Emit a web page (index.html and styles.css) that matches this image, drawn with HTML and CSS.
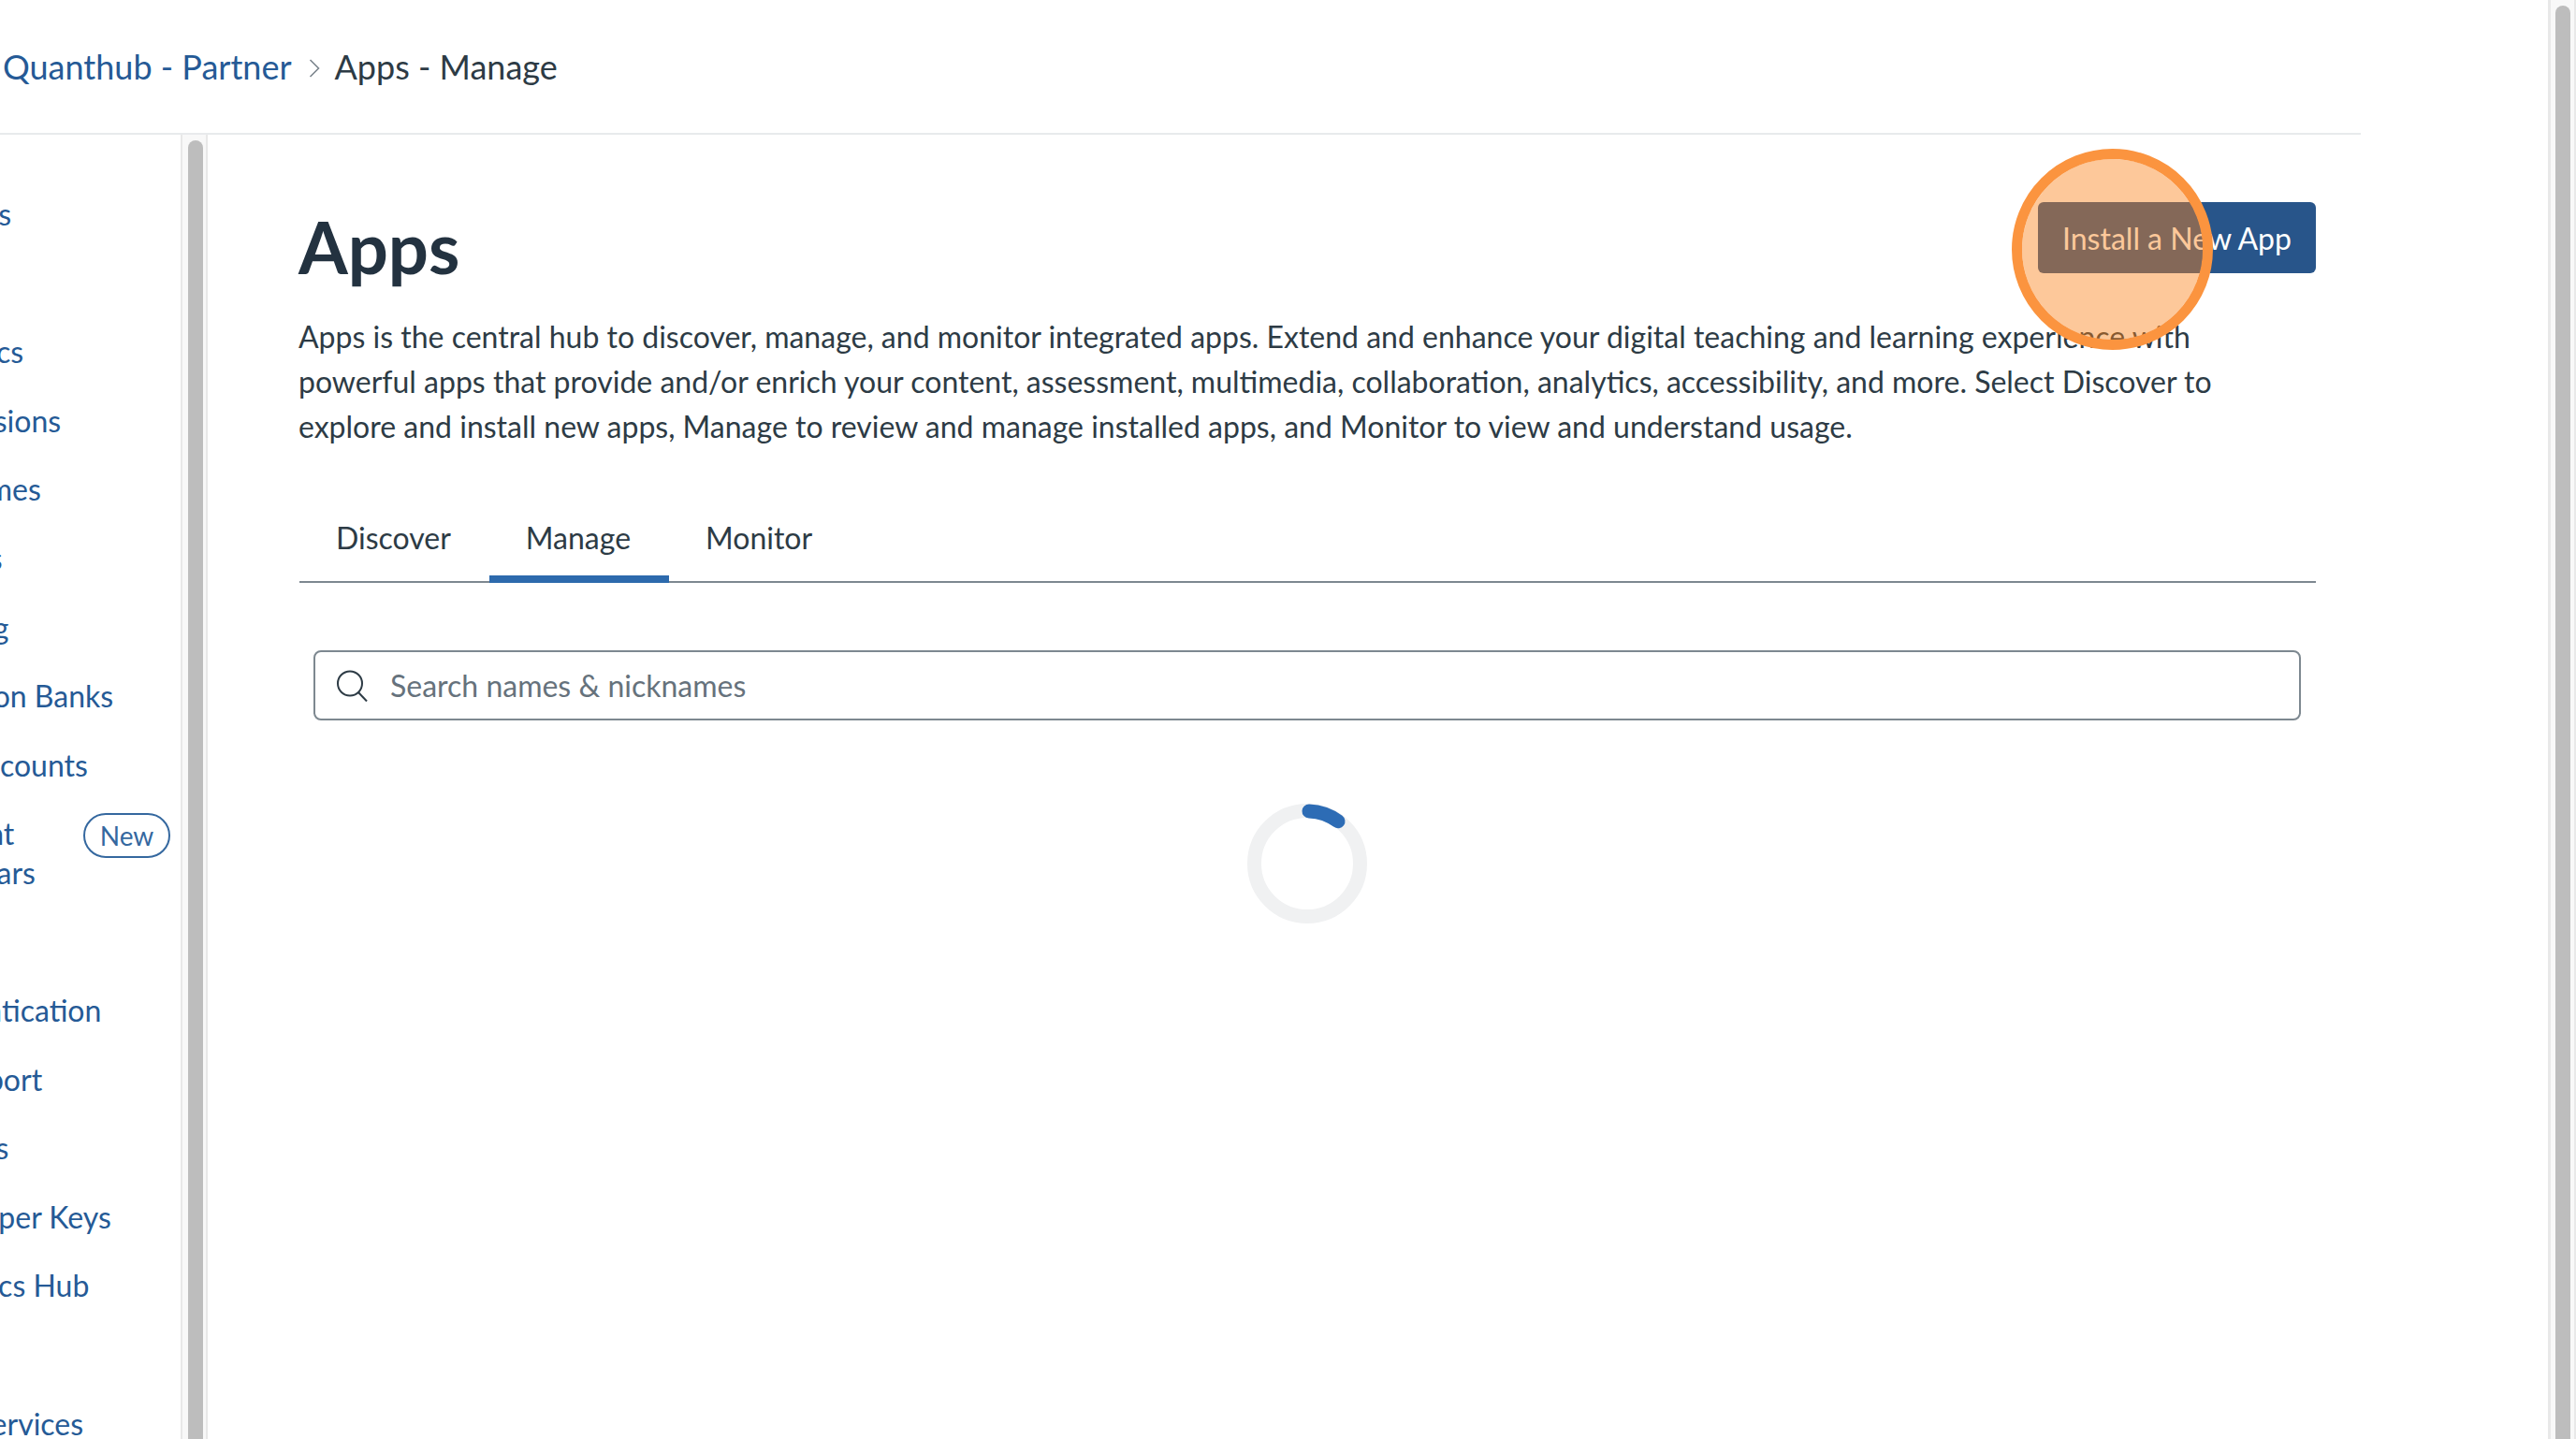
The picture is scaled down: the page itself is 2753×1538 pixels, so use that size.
FILE: index.html
```html
<!DOCTYPE html>
<html lang="en">
<head>
<meta charset="utf-8">
<title>Apps - Manage</title>
<link rel="stylesheet" href="styles.css">
</head>
<body>
<div class="app">
  <div class="viewport">
    <header class="topbar">
      <a class="crumb-link">Quanthub - Partner</a>
      <svg class="crumb-sep" viewBox="0 0 12 20" width="12" height="20"><path d="M1.5 1l9 9-9 9" fill="none" stroke="#7b858d" stroke-width="1.6"/></svg>
      <span class="crumb-current">Apps - Manage</span>
    </header>
    <div class="columns">
      <nav class="sidebar">
        <ul class="nav-list">
          <li class="nav-item">Courses</li>
          <li class="nav-item">People</li>
          <li class="nav-item">Statistics</li>
          <li class="nav-item">Permissions</li>
          <li class="nav-item">Outcomes</li>
          <li class="nav-item">Rubrics</li>
          <li class="nav-item">Grading</li>
          <li class="nav-item">Question Banks</li>
          <li class="nav-item">Sub-Accounts</li>
          <li class="nav-item nav-item-badge"><span class="nav-label">Account<br>Calendars</span><span class="badge">New</span></li>
          <li class="nav-item">Terms</li>
          <li class="nav-item">Authentication</li>
          <li class="nav-item">SIS Import</li>
          <li class="nav-item">Themes</li>
          <li class="nav-item">Developer Keys</li>
          <li class="nav-item">Analytics Hub</li>
          <li class="nav-item">Apps</li>
          <li class="nav-item">Web Services</li>
        </ul>
      </nav>
      <div class="scroll-track side-track"><div class="scroll-thumb"></div></div>
      <main class="main">
        <div class="title-row">
          <h1 class="title">Apps</h1>
          <button class="primary-btn">Install a New App</button>
        </div>
        <p class="intro">Apps is the central hub to discover, manage, and monitor integrated apps. Extend and enhance your digital teaching and learning experience with powerful apps that provide and/or enrich your content, assessment, multimedia, collaboration, analytics, accessibility, and more. Select Discover to explore and install new apps, Manage to review and manage installed apps, and Monitor to view and understand usage.</p>
        <div class="tabs">
          <span class="tab">Discover</span>
          <span class="tab tab-active">Manage</span>
          <span class="tab">Monitor</span>
        </div>
        <div class="search">
          <svg class="search-icon" viewBox="0 0 34 34" width="34" height="34"><circle cx="15" cy="14.5" r="13" fill="none" stroke="#2d3b45" stroke-width="2"/><path d="M24 24l9 9.5" fill="none" stroke="#2d3b45" stroke-width="2"/></svg>
          <span class="search-placeholder">Search names &amp; nicknames</span>
        </div>
        <div class="spinner-wrap">
          <svg class="spinner" viewBox="0 0 128 128" width="128" height="128"><circle cx="64" cy="64" r="56.5" fill="none" stroke="#f0f1f2" stroke-width="15"/><path d="M66 8a56 56 0 0 1 31 10.8" fill="none" stroke="#2d6cb5" stroke-width="15" stroke-linecap="round"/></svg>
        </div>
      </main>
    </div>
    <div class="highlight"></div>
  </div>
  <div class="scroll-track page-track"><div class="scroll-thumb"></div></div>
</div>
</body>
</html>
```
FILE: styles.css
```css
* { box-sizing: border-box; }
html, body { margin: 0; padding: 0; background: #fff; }
body { font-family: Lato, "Open Sans", sans-serif; color: #2d3b45; overflow: hidden; }
.app { display: flex; width: 2753px; height: 1538px; overflow: hidden; }
.viewport { position: relative; width: 2723px; height: 1538px; }
.topbar { width: 2523px; height: 144px; border-bottom: 2px solid #e8eaec; display: flex; align-items: center; padding-left: 3px; padding-bottom: 1px; font-size: 36px; }
.crumb-link { color: #255a96; }
.crumb-sep { margin: 5px 16px 0 18px; }
.crumb-current { color: #2d3b45; }
.columns { display: flex; width: 2523px; height: 1394px; }
.sidebar { width: 193px; overflow: hidden; flex: none; }
.nav-list { list-style: none; margin: 0 0 0 -101px; padding: 64px 0 0 0; width: 294px; }
.nav-item { font-size: 32px; line-height: 42px; color: #255a96; margin-bottom: 31.6px; white-space: nowrap; }
.nav-item-badge { display: flex; justify-content: space-between; align-items: flex-start; padding-right: 11px; margin-bottom: 31px; }
.badge { font-size: 28px; line-height: 44px; height: 48px; width: 93px; margin-top: -1px; text-align: center; border: 2px solid #35689f; border-radius: 24px; color: #35689f; }
.scroll-track { flex: none; background: #f8f8f8; border-left: 2px solid #e8e8e8; border-right: 2px solid #e8e8e8; display: flex; justify-content: center; }
.side-track { width: 29px; padding-top: 6px; padding-left: 3px; }
.page-track { width: 30px; padding-top: 6px; padding-left: 1px; border-left-width: 3px; }
.scroll-thumb { width: 16px; height: 100%; background: #bdbdbd; border-radius: 8px 8px 0 0; }
.main { flex: 1; min-width: 0; padding: 0 48px 0 98px; }
.title-row { display: flex; justify-content: space-between; align-items: flex-start; height: 192px; padding-top: 72px; }
.title { margin: 2px 0 0 -1px; font-size: 76px; line-height: 92px; font-weight: 700; color: #233240; }
.primary-btn { width: 297px; height: 76px; border: 0; border-radius: 6px; background: #28558a; color: #fff; font-family: inherit; font-size: 32px; padding: 0; }
.intro { margin: 0 0 0 -1px; font-size: 32px; line-height: 48px; width: 2070px; color: #2d3b45; }
.tabs { display: flex; margin-top: 51px; height: 92px; border-bottom: 2px solid #7d8890; }
.tab { font-size: 32px; padding: 0 41px 0 39px; line-height: 88px; height: 92px; color: #2d3b45; }
.tab-active { border-bottom: 8px solid #2d6aad; }
.search { margin: 72px 16px 0 15px; height: 75px; border: 2px solid #7d8890; border-radius: 8px; display: flex; align-items: center; padding-left: 22px; }
.search-icon { flex: none; margin-right: 24px; }
.search-placeholder { font-size: 32px; color: #66727c; }
.spinner-wrap { margin-top: 89px; padding-left: 1013px; }
.spinner { display: block; }
.highlight { position: absolute; left: 2150px; top: 159px; width: 215px; height: 215px; border-radius: 50%; border: 11px solid #fb943f; background: rgba(250, 129, 25, 0.44); background-clip: padding-box; }
```
